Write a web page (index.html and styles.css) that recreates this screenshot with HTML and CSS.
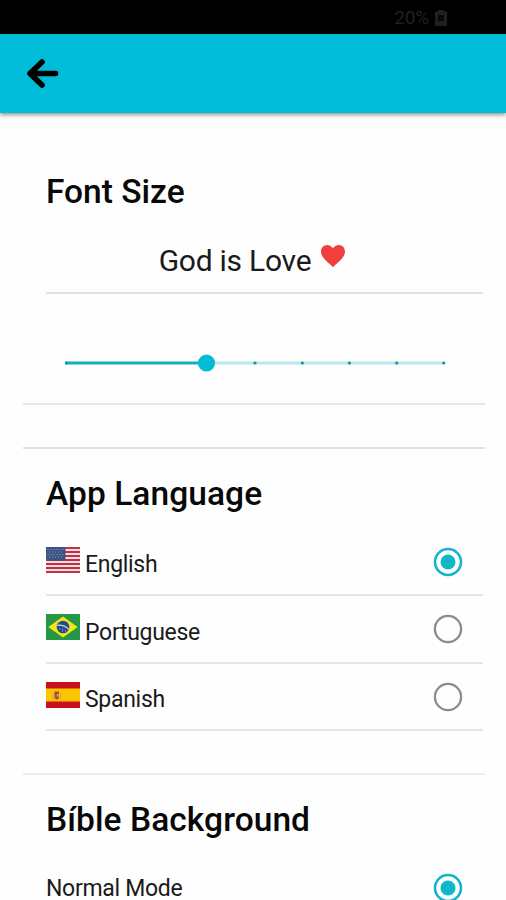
FILE: index.html
```html
<!DOCTYPE html>
<html lang="en">
<head>
<meta charset="utf-8">
<title>Settings</title>
<link rel="stylesheet" href="styles.css">
</head>
<body>
<div class="status"><span>20%</span>
<svg width="12" height="16" viewBox="0 0 12 16"><path d="M3 0h6v1.500h3V16H0V1.500h3z" fill="#202020"/><path d="M3 5h6v6H3z" fill="#080808"/></svg>
</div>
<header class="appbar">
<svg width="34" height="32" viewBox="0 0 34 32" fill="none" stroke="#000" stroke-width="5.600" stroke-linecap="round" stroke-linejoin="round"><path d="M29.500 15.500H5M16 4 4 15.500 16 27"/></svg>
</header>
<main>
<section class="font-section">
<h2>Font Size</h2>
<div class="preview"><span>God is Love</span>
<svg width="26" height="24" viewBox="0 0 26 24"><path d="M13 23.200C9 18.800 1 14 1 7.500 1 3.800 3.800 1 7.200 1c2.400 0 4.600 1.300 5.800 3.400C14.200 2.300 16.400 1 18.800 1 22.200 1 25 3.800 25 7.500 25 14 17 18.800 13 23.200z" fill="#ef403d"/></svg>
</div>
<div class="slider">
<svg width="384" height="20" viewBox="0 0 384 20"><path d="M141 10h240" stroke="#b9e8ee" stroke-width="3"/><path d="M2 10h140" stroke="#13adbd" stroke-width="3.200"/><g fill="#1593a0"><circle cx="3.500" cy="10" r="1.500"/><circle cx="192" cy="10" r="1.600"/><circle cx="239.300" cy="10" r="1.600"/><circle cx="286.500" cy="10" r="1.600"/><circle cx="333.700" cy="10" r="1.600"/><circle cx="380.800" cy="10" r="1.600"/></g><circle cx="143.500" cy="10" r="8.600" fill="#00bcd7"/></svg>
</div>
</section>
<div class="gap"></div>
<section class="language-section">
<h2 class="wide">App Language</h2>
<label class="row">
<svg class="flag" width="34" height="26" viewBox="0 0 34 26"><path fill="#f3dfe0" d="M0 0h34v26H0z"/><path d="M0 1h34M0 5h34M0 9h34M0 13h34M0 17h34M0 21h34M0 25h34" stroke="#bd3344" stroke-width="2"/><path fill="#3e5286" d="M0 0h19.500v13.500H0z"/><path d="M1.500 2.500h17M3 5h15M1.500 7.500h17M3 10h15" stroke="#8c9abf" stroke-width="1" stroke-dasharray="1 2"/></svg>
<span>English</span>
<svg class="radio" width="30" height="30" viewBox="0 0 30 30"><circle cx="15" cy="15" r="13" fill="none" stroke="#12b6ca" stroke-width="2.600"/><circle cx="15" cy="15" r="7.500" fill="#12b6ca"/></svg>
</label>
<label class="row">
<svg class="flag" width="34" height="26" viewBox="0 0 34 26"><path fill="#259747" d="M0 0h34v26H0z"/><path fill="#f5e51b" d="m17 2.500 14.700 10.500L17 23.500 2.300 13z"/><circle cx="17" cy="13" r="6.300" fill="#254b8e"/><path d="M11 11.300q7-.8 11.800 4" fill="none" stroke="#c6d4db" stroke-width="1.200"/><path d="M13 15h1m2 2h1m2 0h1m-4-2h1" stroke="#9db5d1"/></svg>
<span>Portuguese</span>
<svg class="radio" width="30" height="30" viewBox="0 0 30 30"><circle cx="15" cy="15" r="13.100" fill="none" stroke="#8b8b8b" stroke-width="2.300"/></svg>
</label>
<label class="row">
<svg class="flag" width="34" height="26" viewBox="0 0 34 26"><path fill="#c8101e" d="M0 0h34v26H0z"/><path fill="#fdc500" d="M0 6.500h34v13H0z"/><path d="M7 11v7M14.500 11v7" stroke="#d9a345" stroke-width="1.200"/><path d="M8.500 9.500h4.500V16q-2.200 3-4.500 0z" fill="#ad4d2a"/><path d="M10.800 12h2v2.500h-2z" fill="#d9a08b"/></svg>
<span>Spanish</span>
<svg class="radio" width="30" height="30" viewBox="0 0 30 30"><circle cx="15" cy="15" r="13.100" fill="none" stroke="#8b8b8b" stroke-width="2.300"/></svg>
</label>
</section>
<section class="background-section">
<h2 class="wide">Bíble Background</h2>
<label class="row">
<span>Normal Mode</span>
<svg class="radio" width="30" height="30" viewBox="0 0 30 30"><circle cx="15" cy="15" r="13" fill="none" stroke="#12b6ca" stroke-width="2.600"/><circle cx="15" cy="15" r="7.500" fill="#12b6ca"/></svg>
</label>
</section>
</main>
</body>
</html>
```
FILE: styles.css
```css
* { box-sizing: border-box; }
body {
  margin: 0;
  height: 900px;
  overflow: hidden;
  background: #fefefe;
  color: #1a1a1a;
  font-family: Roboto, sans-serif;
}
svg { display: block; flex: none; }
.status {
  display: flex;
  justify-content: flex-end;
  align-items: center;
  gap: 6px;
  height: 34px;
  padding: 1px 59px 0 0;
  background: #000;
  color: #202020;
  font-size: 19px;
  letter-spacing: -.2px;
}
.appbar {
  display: flex;
  align-items: center;
  height: 79px;
  padding-left: 26px;
  background: #00bcd9;
  box-shadow: 0 2px 4px rgba(60, 40, 40, .5);
}
h2 {
  margin: 0;
  font-size: 33.5px;
  font-weight: 500;
  line-height: 40px;
  color: #080808;
  white-space: nowrap;
}
.wide { letter-spacing: .07px; }
section, .gap { margin: 0 21px 0 23px; }
.font-section {
  height: 292px;
  padding: 59px 2px 0 23px;
  border-bottom: 2px solid #e8e8e8;
}
.preview {
  display: flex;
  justify-content: center;
  gap: 9px;
  height: 51px;
  margin-top: 31px;
  padding-right: 24px;
  border-bottom: 2px solid #e2e2e2;
  font-size: 30px;
  line-height: 36px;
  letter-spacing: -.25px;
}
.slider { padding: 59px 0 0 17px; }
.preview svg { margin-top: 1px; }
.gap { height: 44px; border-bottom: 2px solid #e2e2e2; }
.language-section {
  height: 326px;
  padding: 25px 2px 0 23px;
  border-bottom: 2px solid #ececec;
}
.row {
  display: flex;
  height: 67.5px;
  padding: 18px 20px 0 0;
  border-bottom: 2px solid #e5e5e5;
  font-size: 23px;
  line-height: 28px;
  letter-spacing: -.3px;
}
.language-section h2 + .row { margin-top: 14.5px; }
.flag { margin-right: 5px; }
.row span { margin-top: 4.5px; white-space: nowrap; }
.radio { margin-left: auto; }
.background-section { padding: 25px 2px 0 23px; }
.background-section .row { margin-top: 14.5px; }
.background-section .row span { margin-top: 2px; }
```
